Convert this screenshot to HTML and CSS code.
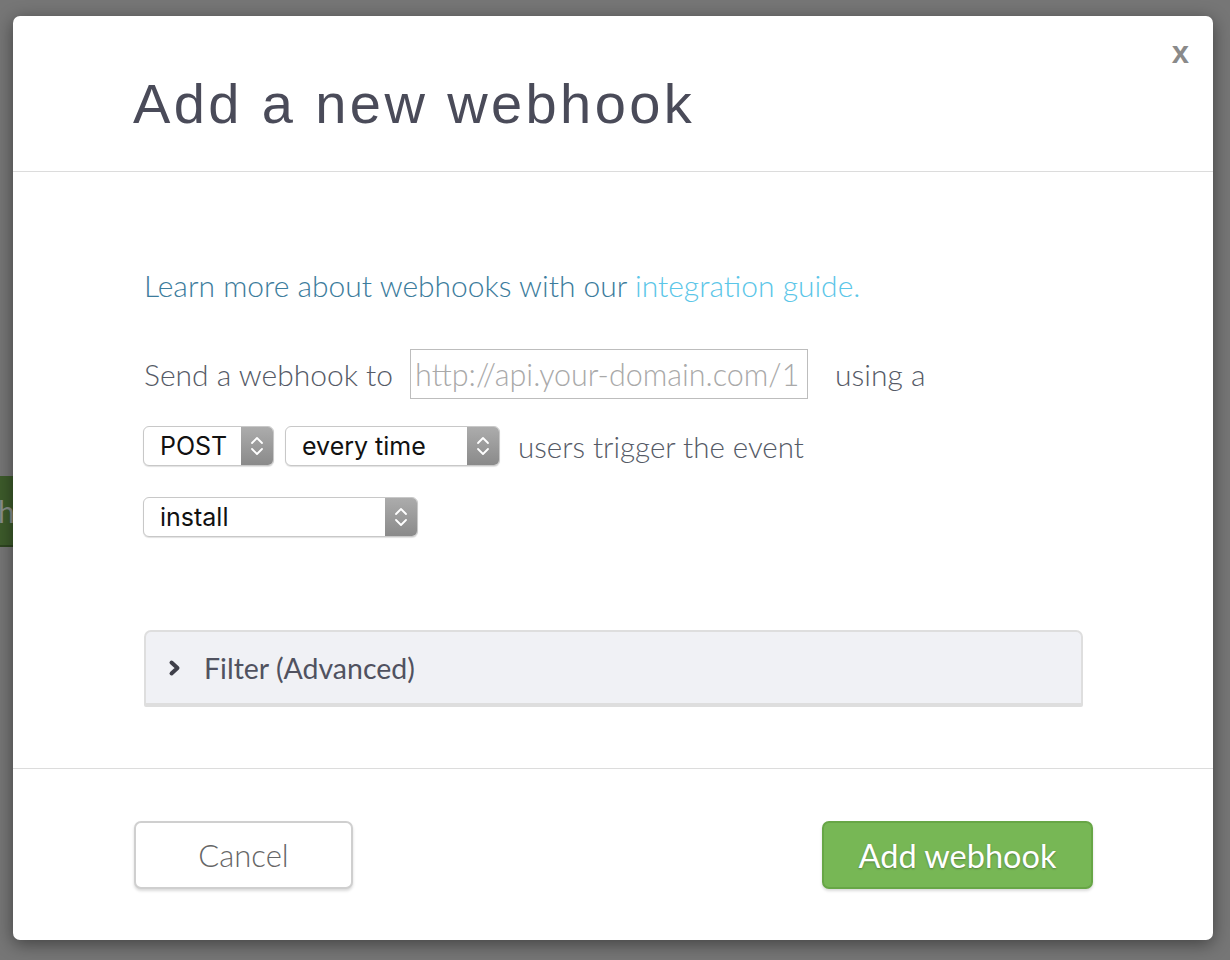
FILE: index.html
```html
<!DOCTYPE html>
<html>
<head>
<meta charset="utf-8">
<link rel="stylesheet" href="styles.css">
</head>
<body>
<div class="bg-button">h</div>
<div class="modal">
  <div class="close">x</div>
  <div class="modal-header">
    <h1 class="title">Add a new webhook</h1>
  </div>
  <div class="modal-body">
    <p class="learn">Learn more about webhooks with our <a class="guide">integration guide.</a></p>
    <div class="row row-send">
      <span class="label">Send a webhook to</span>
      <div class="url-input"><span class="placeholder">http://api.your-domain.com/1</span></div>
      <span class="label">using a</span>
    </div>
    <div class="row row-method">
      <div class="select sel-post"><span class="sel-text">POST</span><span class="sel-arrow"><svg width="16" height="24" viewBox="0 0 16 24"><path d="M3 9 L8 4 L13 9 M3 15 L8 20 L13 15" fill="none" stroke="#fff" stroke-width="1.8" stroke-linecap="round" stroke-linejoin="round"/></svg></span></div>
      <div class="select sel-freq"><span class="sel-text">every time</span><span class="sel-arrow"><svg width="16" height="24" viewBox="0 0 16 24"><path d="M3 9 L8 4 L13 9 M3 15 L8 20 L13 15" fill="none" stroke="#fff" stroke-width="1.8" stroke-linecap="round" stroke-linejoin="round"/></svg></span></div>
      <span class="label">users trigger the event</span>
    </div>
    <div class="row row-event">
      <div class="select sel-event"><span class="sel-text">install</span><span class="sel-arrow"><svg width="16" height="24" viewBox="0 0 16 24"><path d="M3 9 L8 4 L13 9 M3 15 L8 20 L13 15" fill="none" stroke="#fff" stroke-width="1.8" stroke-linecap="round" stroke-linejoin="round"/></svg></span></div>
    </div>
    <div class="filter">
      <svg class="chev" width="16" height="20" viewBox="0 0 16 20"><path d="M4.5 4.5 L10.5 10 L4.5 15.5" fill="none" stroke="#3f404a" stroke-width="4" stroke-linecap="round" stroke-linejoin="round"/></svg>
      <span class="filter-text">Filter (Advanced)</span>
    </div>
  </div>
  <div class="modal-footer">
    <button class="btn btn-cancel">Cancel</button>
    <button class="btn btn-add">Add webhook</button>
  </div>
</div>
</body>
</html>
```

FILE: styles.css
```css
html, body {
  margin: 0;
  padding: 0;
}
body {
  width: 1230px;
  height: 960px;
  background: #767676;
  padding: 16px 0 0 13px;
  box-sizing: border-box;
  overflow: hidden;
  font-family: "Lato", "Open Sans", sans-serif;
  position: relative;
}
.bg-button {
  position: absolute;
  left: -20px;
  top: 476px;
  width: 60px;
  height: 71px;
  background: #3d5b2b;
  border-bottom: 2px solid #2e4620;
  box-sizing: border-box;
  color: #8a8f8a;
  font-family: "Lato", sans-serif;
  font-size: 30px;
  line-height: 71px;
  padding-left: 18px;
}
.modal {
  position: relative;
  width: 1200px;
  height: 924px;
  background: #fff;
  border-radius: 7px;
  box-shadow: 0 4px 18px rgba(0,0,0,0.45);
  display: flex;
  flex-direction: column;
}
.close {
  position: absolute;
  right: 24px;
  top: 21px;
  font-family: "Liberation Sans", Arial, sans-serif;
  font-weight: bold;
  font-size: 31px;
  color: #8a8a8a;
  line-height: 1;
}
.modal-header {
  height: 155px;
  border-bottom: 1px solid #dcdcdc;
  padding-left: 120px;
  box-sizing: content-box;
}
.title {
  margin: 0;
  padding-top: 60px;
  font-family: "Liberation Sans", Arial, sans-serif;
  font-weight: normal;
  font-size: 56px;
  line-height: 56px;
  letter-spacing: 3.4px;
  color: #4a4b59;
}
.modal-body {
  border-bottom: 1px solid #dcdcdc;
  padding-left: 131px;
  padding-top: 96px;
  box-sizing: border-box;
  height: 597px;
}
.learn {
  margin: 0;
  font-size: 30px;
  font-weight: 300;
  line-height: 34px;
  color: #3c7c9c;
}
.guide {
  color: #5bc6e8;
}
.row {
  display: flex;
  align-items: center;
}
.label {
  font-size: 30px;
  font-weight: 300;
  color: #555a66;
}
.row-send {
  margin-top: 47px;
  height: 50px;
}
.url-input {
  width: 398px;
  height: 50px;
  box-sizing: border-box;
  border: 1px solid #bdbdbd;
  margin-left: 17px;
  margin-right: 27px;
  display: flex;
  align-items: center;
  padding-left: 4px;
  overflow: hidden;
}
.placeholder {
  font-size: 30.5px;
  font-weight: 300;
  color: #a9a9a9;
  white-space: nowrap;
}
.row-method {
  margin-top: 27px;
  margin-left: -1px;
  gap: 11px;
}
.row-method .label {
  margin-left: 7px;
  font-size: 29.5px;
}
.row-event {
  margin-top: 31px;
  margin-left: -1px;
}
.select {
  height: 40px;
  box-sizing: border-box;
  border: 1px solid #c8c8c8;
  border-radius: 6px;
  background: #fff;
  display: flex;
  align-items: stretch;
  overflow: hidden;
  box-shadow: 0 1px 1px rgba(0,0,0,0.12);
}
.sel-text {
  flex: 1;
  font-family: "Inter", "Liberation Sans", sans-serif;
  font-size: 25px;
  color: #111;
  line-height: 38px;
  padding-left: 16px;
}
.sel-arrow {
  width: 32px;
  background: linear-gradient(#acacac, #8a8a8a);
  display: flex;
  align-items: center;
  justify-content: center;
}
.sel-post { width: 131px; }
.sel-freq { width: 215px; }
.sel-event { width: 275px; }
.filter {
  margin-top: 93px;
  width: 939px;
  height: 77px;
  box-sizing: border-box;
  background: #f0f1f5;
  border: 2px solid #dedede;
  border-bottom-width: 4px;
  border-radius: 7px 7px 2px 2px;
  display: flex;
  align-items: center;
  padding-left: 21px;
}
.filter-text {
  margin-left: 21px;
  font-size: 28.5px;
  font-weight: 400;
  color: #505260;
}
.modal-footer {
  flex: 1;
  display: flex;
  justify-content: space-between;
  align-items: flex-start;
  padding: 52px 120px 0 121px;
}
.btn {
  height: 68px;
  border-radius: 7px;
  font-family: "Lato", sans-serif;
  font-size: 31px;
  padding: 0;
  cursor: pointer;
}
.btn-cancel {
  width: 219px;
  background: #fff;
  border: 2px solid #cfcfcf;
  color: #666;
  font-weight: 300;
  box-shadow: 0 2px 3px rgba(0,0,0,0.15);
}
.btn-add {
  width: 271px;
  background: #77b755;
  border: 2px solid #67a646;
  color: #fff;
  font-size: 32.5px;
  font-weight: 400;
  text-shadow: 0 1px 2px rgba(0,0,0,0.3);
  box-shadow: 0 2px 3px rgba(0,0,0,0.15);
}
```
